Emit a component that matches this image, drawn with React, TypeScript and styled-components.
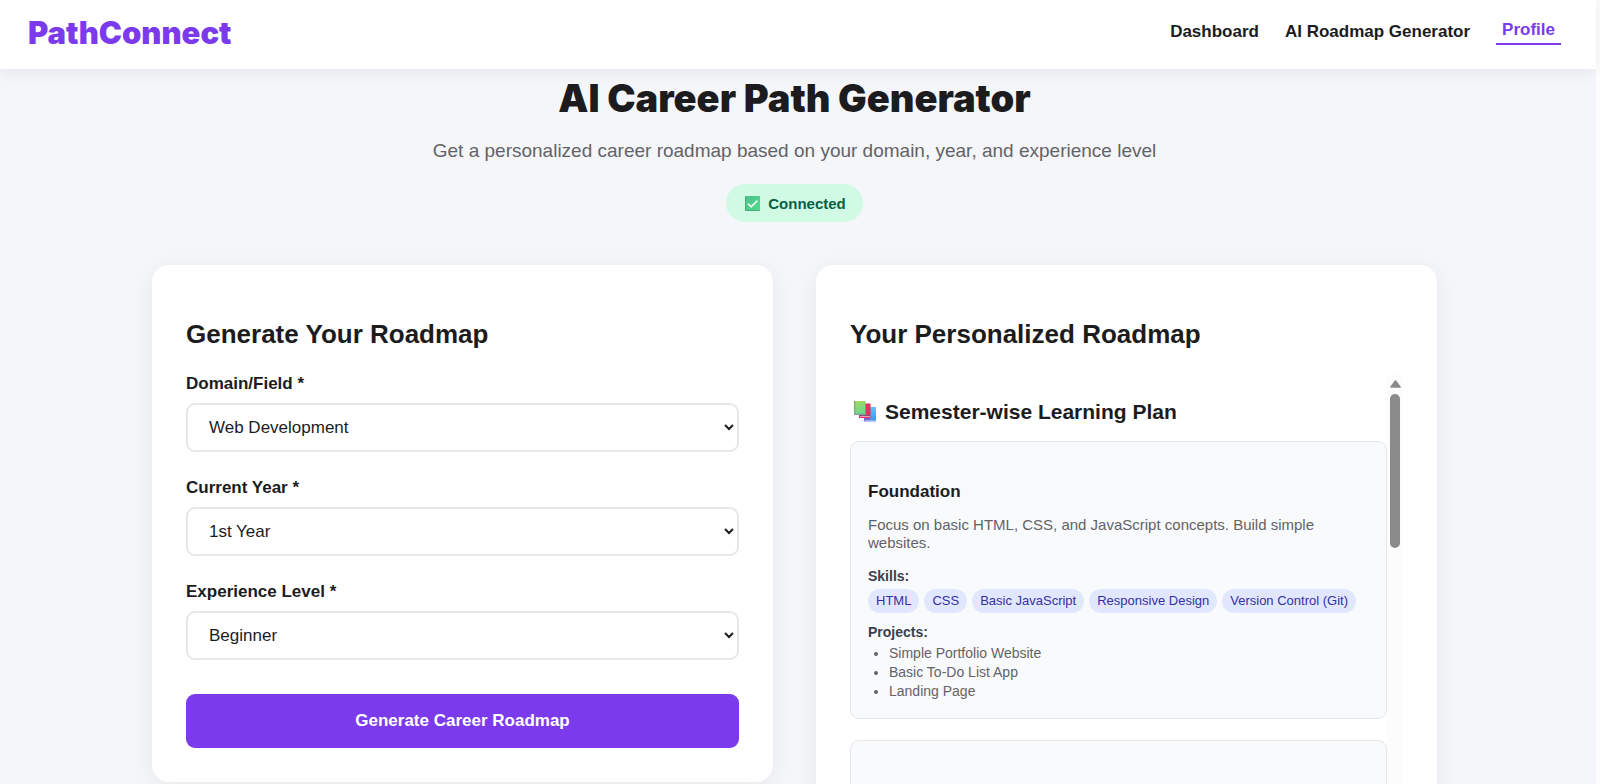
import React from 'react';
import styled, { createGlobalStyle } from 'styled-components';

const GlobalStyle = createGlobalStyle`
  *, *::before, *::after { box-sizing: border-box; }
  body {
    margin: 0;
    background: #fdfdfd;
    color: #1c1c1e;
    font-family: "Liberation Sans", Arial, sans-serif;
  }
  h1, h2, h3, h4, p, ul { margin: 0; padding: 0; }
`;

const Shell = styled.div`
  display: flex;
  flex-direction: column;
  min-height: 100vh;
  margin-right: 4px;
  background: #f5f6fa;
`;

const Header = styled.header`
  display: flex;
  align-items: center;
  justify-content: space-between;
  height: 69px;
  padding: 0 35px 5px 28px;
  background: #fff;
  box-shadow: 0 2px 16px rgba(0, 0, 0, 0.08);
`;

const Logo = styled.a`
  padding-top: 2px;
  color: #7c3aed;
  font: 900 31px/40px Inter, sans-serif;
  text-decoration: none;
`;

const Nav = styled.nav`
  display: flex;
  align-items: center;
  gap: 26px;
`;

const NavLink = styled.a<{ $active?: boolean }>`
  padding: ${(p) => (p.$active ? '0 6px 3px' : '0')};
  border-bottom: ${(p) => (p.$active ? '2px solid #7c3aed' : 'none')};
  color: ${(p) => (p.$active ? '#7c3aed' : '#1c1c1e')};
  font-size: 17px;
  font-weight: 700;
  line-height: 20px;
  text-decoration: none;
`;

const Main = styled.main`
  padding: 8px 7px 43px 0;
`;

const Hero = styled.section`
  display: flex;
  flex-direction: column;
  align-items: center;
  text-align: center;
`;

const PageTitle = styled.h1`
  font: 900 38px/42px Inter, sans-serif;
`;

const Subtitle = styled.p`
  margin-top: 20px;
  color: #636366;
  font-size: 19px;
  line-height: 24px;
`;

const Status = styled.div`
  display: flex;
  align-items: center;
  gap: 8px;
  height: 38px;
  margin-top: 21px;
  padding: 0 17px 0 19px;
  border-radius: 19px;
  background: #d1fae5;
  color: #065f46;
  font-size: 15px;
  font-weight: 700;
`;

const Columns = styled.div`
  display: grid;
  grid-template-columns: repeat(2, minmax(0, 1fr));
  align-items: start;
  gap: 43px;
  max-width: 1285px;
  margin: 43px auto 0;
`;

const Card = styled.section`
  padding: 53px 34px 34px;
  border-radius: 17px;
  background: #fff;
  box-shadow: 0 4px 24px rgba(0, 0, 0, 0.06);
`;

const CardTitle = styled.h2`
  font-size: 26px;
  line-height: 32px;
`;

const Form = styled.form`
  display: flex;
  flex-direction: column;
  gap: 26px;
  margin-top: 24px;
`;

const Field = styled.div`
  display: flex;
  flex-direction: column;
  gap: 9px;
`;

const Label = styled.label`
  font-size: 17px;
  font-weight: 700;
  line-height: 20px;
`;

const Select = styled.select`
  width: 100%;
  height: 49px;
  padding: 0 0 0 17px;
  border: 2px solid #e5e7eb;
  border-radius: 9px;
  background-color: #fff;
  color: #1c1c1e;
  font: 17px "Liberation Sans", Arial, sans-serif;
`;

const SubmitButton = styled.button`
  height: 54px;
  margin-top: 8px;
  border: 0;
  border-radius: 9px;
  background: #7c3aed;
  color: #fff;
  font: 700 17px "Liberation Sans", Arial, sans-serif;
`;

const ScrollPanel = styled.div`
  display: flex;
  height: 534px;
  margin-top: 25px;
`;

const ScrollContent = styled.div`
  flex: 1;
  min-width: 0;
  padding-top: 24px;
  overflow-y: auto;
  scrollbar-width: none;
`;

const ScrollTrack = styled.div`
  display: flex;
  flex-direction: column;
  align-items: center;
  gap: 6px;
  width: 16px;
  padding-top: 5px;
  background: #fcfcfc;
`;

const ScrollThumb = styled.div`
  width: 10px;
  height: 154px;
  border-radius: 5px;
  background: #8b8b8b;
`;

const PlanTitle = styled.h3`
  display: flex;
  align-items: center;
  gap: 9px;
  padding-left: 4px;
  font-size: 21px;
  line-height: 26px;
`;

const Stage = styled.article`
  min-height: 278px;
  margin: 16px 0 21px;
  padding: 40px 17px 17px;
  border: 1px solid #e5e7eb;
  border-radius: 9px;
  background: #f9fafc;

  & + & { margin-top: 0; }
`;

const StageTitle = styled.h4`
  font-size: 17px;
  line-height: 20px;
`;

const Description = styled.p`
  margin-top: 14px;
  color: #636366;
  font-size: 15px;
  line-height: 18px;
`;

const GroupLabel = styled.p<{ $gap: number }>`
  margin-top: ${(p) => p.$gap}px;
  color: #374151;
  font-size: 14px;
  font-weight: 700;
  line-height: 16px;
`;

const Tags = styled.div`
  display: flex;
  flex-wrap: wrap;
  gap: 5px;
  margin-top: 5px;
`;

const Tag = styled.span`
  padding: 0 8px;
  border-radius: 12px;
  background: #e0e7ff;
  color: #3730a3;
  font-size: 13px;
  line-height: 24px;
`;

const Projects = styled.ul`
  margin-top: 4px;
  padding-left: 21px;
  color: #636366;
  font-size: 14px;
  line-height: 19px;
`;

const CheckIcon = () => (
  <svg width="15" height="15" viewBox="0 0 15 15" aria-hidden="true">
    <defs>
      <linearGradient id="check" x1="0" y1="0" x2="1" y2="1">
        <stop offset="0" stopColor="#4fc08a" />
        <stop offset="1" stopColor="#4fdc8c" />
      </linearGradient>
    </defs>
    <rect width="15" height="15" rx="1" fill="#3fae78" />
    <rect x="1" width="14" height="14" rx="1" fill="url(#check)" />
    <path d="M3 7.6 6.2 10.8 12.4 4.6" fill="none" stroke="#f1fff7" strokeWidth="1.6" />
  </svg>
);

const BooksIcon = () => (
  <svg width="22" height="22" viewBox="0 0 22 22" aria-hidden="true">
    <defs>
      <linearGradient id="green" x1="0" y1="0" x2="0.3" y2="1">
        <stop offset="0" stopColor="#a4dc62" />
        <stop offset="1" stopColor="#6fd58c" />
      </linearGradient>
      <linearGradient id="blue" x1="0" y1="0" x2="0" y2="1">
        <stop offset="0" stopColor="#58c8f2" />
        <stop offset="1" stopColor="#3b97e6" />
      </linearGradient>
    </defs>
    <path d="M10 17h6V6h6v14H10z" fill="url(#blue)" />
    <path d="M10 16.5h6v4H10z" fill="#7a63c4" />
    <path d="M10.5 19.3H22V21H10.5z" fill="#b5c3fa" />
    <path d="M5 14h6V2.5h5.5V17H5z" fill="#e0335f" />
    <path d="M5 14h11v1H5z" fill="#8c4a7b" />
    <path d="M6 15h10v1H6z" fill="#e79ac0" />
    <path d="M0 0h11.5v14H0z" fill="url(#green)" />
    <path d="M0 0h1.2v13H0z" fill="#85a277" />
    <path d="M0 12.6h11.5V14H0z" fill="#82a59a" />
  </svg>
);

const fields = [
  { id: 'domain', label: 'Domain/Field *', value: 'Web Development' },
  { id: 'year', label: 'Current Year *', value: '1st Year' },
  { id: 'experience', label: 'Experience Level *', value: 'Beginner' },
];

const skills = ['HTML', 'CSS', 'Basic JavaScript', 'Responsive Design', 'Version Control (Git)'];
const projects = ['Simple Portfolio Website', 'Basic To-Do List App', 'Landing Page'];

export default function App() {
  return (
    <>
      <GlobalStyle />
      <Shell>
        <Header>
          <Logo href="#">PathConnect</Logo>
          <Nav>
            <NavLink href="#dashboard">Dashboard</NavLink>
            <NavLink href="#roadmap">AI Roadmap Generator</NavLink>
            <NavLink href="#profile" $active>Profile</NavLink>
          </Nav>
        </Header>
        <Main>
          <Hero>
            <PageTitle>AI Career Path Generator</PageTitle>
            <Subtitle>
              Get a personalized career roadmap based on your domain, year, and experience level
            </Subtitle>
            <Status><CheckIcon />Connected</Status>
          </Hero>
          <Columns>
            <Card>
              <CardTitle>Generate Your Roadmap</CardTitle>
              <Form onSubmit={(e) => e.preventDefault()}>
                {fields.map((f) => (
                  <Field key={f.id}>
                    <Label htmlFor={f.id}>{f.label}</Label>
                    <Select id={f.id} defaultValue={f.value}>
                      <option>{f.value}</option>
                    </Select>
                  </Field>
                ))}
                <SubmitButton type="submit">Generate Career Roadmap</SubmitButton>
              </Form>
            </Card>
            <Card>
              <CardTitle>Your Personalized Roadmap</CardTitle>
              <ScrollPanel>
                <ScrollContent>
                  <PlanTitle><BooksIcon />Semester-wise Learning Plan</PlanTitle>
                  <Stage>
                    <StageTitle>Foundation</StageTitle>
                    <Description>
                      Focus on basic HTML, CSS, and JavaScript concepts. Build simple websites.
                    </Description>
                    <GroupLabel $gap={16}>Skills:</GroupLabel>
                    <Tags>{skills.map((s) => <Tag key={s}>{s}</Tag>)}</Tags>
                    <GroupLabel $gap={11}>Projects:</GroupLabel>
                    <Projects>{projects.map((p) => <li key={p}>{p}</li>)}</Projects>
                  </Stage>
                  <Stage />
                </ScrollContent>
                <ScrollTrack aria-hidden="true">
                  <svg width="11" height="8" viewBox="0 0 11 8">
                    <path d="M5.5 1 10 7H1z" fill="#8b8b8b" stroke="#8b8b8b" strokeWidth="1.6" strokeLinejoin="round" />
                  </svg>
                  <ScrollThumb />
                </ScrollTrack>
              </ScrollPanel>
            </Card>
          </Columns>
        </Main>
      </Shell>
    </>
  );
}
